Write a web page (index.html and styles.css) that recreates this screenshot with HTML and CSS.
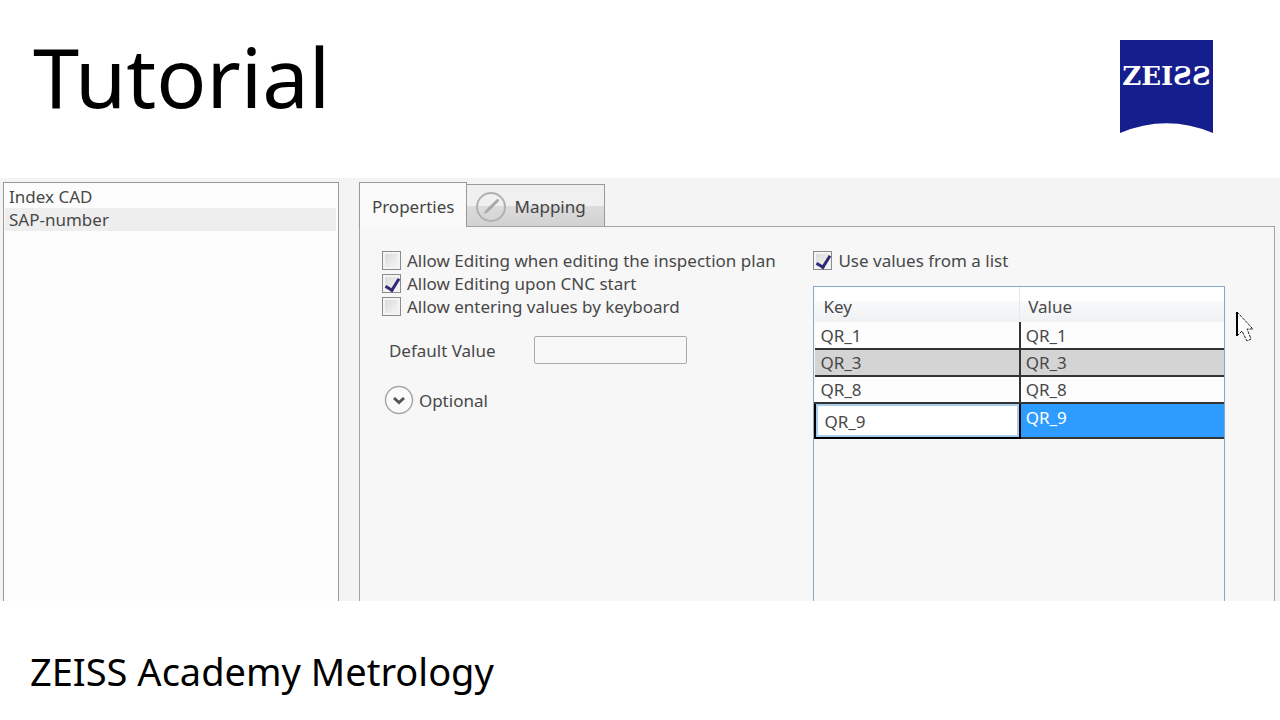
FILE: index.html
```html
<!DOCTYPE html>
<html lang="en">
<head>
    <meta charset="UTF-8">
    <title>Tutorial - ZEISS Academy Metrology</title>
    <link rel="stylesheet" href="styles.css">
</head>
<body>

<!-- Header -->
<header class="header">
    <h1 class="title">Tutorial</h1>
    <div class="logo">
        <svg class="logo-shape" viewBox="0 0 93 93" aria-hidden="true">
            <path d="M0 0H93V93Q46.500 73.500 0 93Z" fill="#141e8c"/>
        </svg>
        <span class="logo-text">ZEI<span class="flip">S</span><span class="flip">S</span></span>
    </div>
</header>

<!-- Application window -->
<main class="window">
    <ul class="item-list">
        <li>Index CAD</li>
        <li class="selected">SAP-number</li>
    </ul>

    <section class="editor">
        <div class="tabs">
            <button class="tab active" type="button">Properties</button>
            <button class="tab" type="button">
                <svg class="tab-icon" viewBox="0 0 32 32" aria-hidden="true">
                    <circle cx="16" cy="16" r="14" fill="none" stroke="#b0b0b0" stroke-width="2"/>
                    <path d="M22.500 9.500L15 17" stroke="#a8a8a8" stroke-width="3" stroke-linecap="round"/>
                    <path d="M15 15L17 17L12.500 21.500L8.500 23L10.500 19.500Z" fill="#a8a8a8"/>
                </svg>
                Mapping
            </button>
        </div>

        <div class="panel">
            <div class="options">
                <label class="check"><input type="checkbox"> Allow Editing when editing the inspection plan</label>
                <label class="check"><input type="checkbox" checked> Allow Editing upon CNC start</label>
                <label class="check"><input type="checkbox"> Allow entering values by keyboard</label>

                <div class="field">
                    <label for="default-value">Default Value</label>
                    <input type="text" id="default-value">
                </div>

                <button class="expander" type="button">
                    <svg class="expander-icon" viewBox="0 0 30 30" aria-hidden="true">
                        <circle cx="15" cy="15" r="13.500" fill="#fafafa" stroke="#a8a8a8" stroke-width="1.500"/>
                        <path d="M10 13L15 17.500L20 13" fill="none" stroke="#555" stroke-width="3"/>
                    </svg>
                    Optional
                </button>
            </div>

            <div class="values">
                <label class="check"><input type="checkbox" checked> Use values from a list</label>
                <div class="grid-box">
                    <table>
                        <thead>
                            <tr><th>Key</th><th>Value</th></tr>
                        </thead>
                        <tbody>
                            <tr><td>QR_1</td><td>QR_1</td></tr>
                            <tr class="alt"><td>QR_3</td><td>QR_3</td></tr>
                            <tr><td>QR_8</td><td>QR_8</td></tr>
                            <tr class="editing">
                                <td><input type="text" aria-label="Key" value="QR_9"></td>
                                <td>QR_9</td>
                            </tr>
                        </tbody>
                    </table>
                </div>
            </div>
        </div>
    </section>

    <!-- Mouse pointer -->
    <svg class="pointer" viewBox="0 0 18 32" aria-hidden="true">
        <path d="M1 1V25L6 20L11 30L15 28L11 18H17Z" fill="#fff" stroke="#222" stroke-width="1" stroke-dasharray="3 1"/>
        <path d="M1 1V25" stroke="#000" stroke-width="2"/>
    </svg>
</main>

<!-- Footer -->
<footer class="footer">ZEISS Academy Metrology</footer>

</body>
</html>
```

FILE: styles.css
```css
* {
    box-sizing: border-box;
}
body {
    font-family: "Noto Sans", sans-serif;
    background-color: #fff;
    color: #000;
    margin: 0;
    min-height: 100vh;
    display: flex;
    flex-direction: column;
}

/* Header */
.header {
    display: flex;
    justify-content: space-between;
    align-items: flex-start;
    height: 178px;
    padding: 16px 67px 0 33px;
}
.title {
    margin: 0;
    font-size: 83px;
    font-weight: 400;
    line-height: 120px;
}
.logo {
    position: relative;
    width: 93px;
    height: 93px;
    margin-top: 24px;
}
.logo-shape {
    display: block;
    width: 100%;
}
.logo-text {
    position: absolute;
    top: 20px;
    left: 0;
    width: 100%;
    text-align: center;
    color: #fff;
    font-family: "DejaVu Serif", serif;
    font-weight: 700;
    font-size: 26px;
    line-height: 32px;
}
.flip {
    display: inline-block;
    transform: scaleX(-1);
}

/* Application window */
.window {
    position: relative;
    flex: 1;
    display: grid;
    grid-template-columns: 11fr 30fr;
    gap: 20px;
    padding: 4px 5px 0 3px;
    background-color: #f4f4f4;
    color: #484848;
    font-size: 17px;
    line-height: 23px;
}
.item-list {
    list-style: none;
    margin: 0;
    padding: 2px 2px 0 1px;
    border: 1px solid #999;
    border-bottom: none;
    background-color: #fcfcfc;
}
.item-list li {
    padding-left: 4px;
}
.item-list .selected {
    background-color: #eee;
}
.editor {
    display: flex;
    flex-direction: column;
}

/* Tabs */
.tabs {
    display: flex;
    align-items: flex-end;
    height: 44px;
}
.tab {
    display: flex;
    align-items: center;
    gap: 7px;
    height: 42px;
    padding: 2px 18px 0 8px;
    border: 1px solid #999;
    border-left: none;
    border-bottom: none;
    background: linear-gradient(#f0f0f0 50%, #dcdcdc 50%, #d2d2d2);
    color: #444;
    font: inherit;
}
.tab.active {
    position: relative;
    height: 45px;
    margin-bottom: -1px;
    padding: 2px 12px 0;
    border-left: 1px solid #999;
    background: #fafafa;
}
.tab-icon {
    width: 32px;
    height: 32px;
}
.panel {
    flex: 1;
    display: grid;
    grid-template-columns: 1fr 1fr;
    gap: 20px;
    padding: 22px 49px 0 22px;
    border: 1px solid #a4a4a4;
    border-bottom: none;
    background-color: #f7f7f7;
}

/* Check boxes */
.check {
    display: flex;
    align-items: center;
    gap: 6px;
    white-space: nowrap;
}
.check input {
    appearance: none;
    flex: none;
    width: 19px;
    height: 19px;
    margin: 0;
    border: 1px solid #8c8c8c;
    background: linear-gradient(135deg, #d8d8d8, #f8f8f8);
    box-shadow: inset 0 0 0 2px #f4f4f4;
}
.check input:checked::before {
    content: "";
    display: block;
    width: 6px;
    height: 12px;
    margin: 1px 0 0 5px;
    border: solid #2e2a78;
    border-width: 0 3px 3px 0;
    transform: rotate(32deg);
}

/* Default value and expander */
.field {
    display: flex;
    align-items: center;
    gap: 38px;
    margin: 18px 0 0 7px;
}
.field input {
    width: 153px;
    height: 28px;
    border: 1px solid #aaa;
    border-radius: 2px;
    background-color: #f8f8f8;
    font: inherit;
}
.expander {
    display: flex;
    align-items: center;
    gap: 5px;
    margin: 21px 0 0 2px;
    padding: 0;
    border: none;
    background: none;
    color: inherit;
    font: inherit;
}
.expander-icon {
    width: 30px;
    height: 30px;
}

/* Key / value table */
.values {
    display: flex;
    flex-direction: column;
    gap: 14px;
}
.grid-box {
    flex: 1;
    border: 1px solid #86a9cc;
    border-bottom: none;
}
table {
    width: 100%;
    table-layout: fixed;
    border-collapse: collapse;
}
th {
    height: 35px;
    padding: 3px 8px 0;
    border-right: 1px solid #e8e8e8;
    background: linear-gradient(#fff 35%, #f7f8fa 45%, #f0f1f3);
    font-weight: 400;
    text-align: left;
}
th:last-child {
    border-right: none;
}
td {
    height: 27px;
    padding: 0 5px;
    border-bottom: 2px solid #333;
    background-color: #fdfdfd;
}
td:first-child {
    border-right: 2px solid #333;
}
.alt td {
    background-color: #d4d4d4;
}
.editing td {
    height: 35px;
    padding-bottom: 7px;
    background-color: #2e9bff;
    color: #fff;
}
.editing td:first-child {
    padding: 0;
    border: 2px solid #000;
}
.editing input {
    display: block;
    width: 100%;
    height: 33px;
    padding: 2px 6px 0;
    border: 2px solid #a9cdec;
    background-color: #fff;
    color: #484848;
    font: inherit;
}

.pointer {
    position: absolute;
    top: 133px;
    right: 26px;
    width: 18px;
    height: 32px;
}

/* Footer */
.footer {
    height: 119px;
    padding: 40px 30px 0;
    font-size: 38px;
    line-height: 60px;
}
```
